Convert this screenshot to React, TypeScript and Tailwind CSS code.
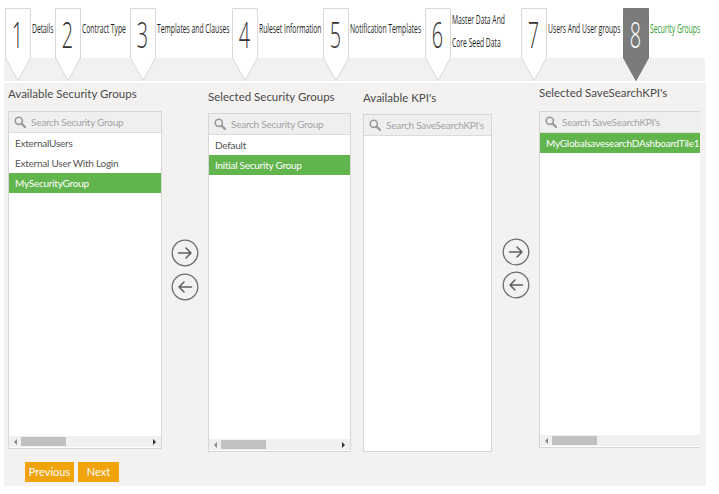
import React from 'react';

const steps = [
  { n: '1', label: ['Details'], w: 'w-[25px]' },
  { n: '2', label: ['Contract Type'], w: 'w-[50px]' },
  { n: '3', label: ['Templates and Clauses'], w: 'w-[77px]' },
  { n: '4', label: ['Ruleset Information'], w: 'w-[66px]' },
  { n: '5', label: ['Notification Templates'], w: 'w-[77px]' },
  { n: '6', label: ['Master Data And', 'Core Seed Data'], w: 'w-[71px]' },
  { n: '7', label: ['Users And User groups'], w: 'w-[77px]' },
  { n: '8', label: ['Security Groups'], w: 'w-[60px]', active: true },
];

function StepTab({ n, active }: { n: string; active?: boolean }) {
  return (
    <div className="relative w-[25px] h-[50px] mt-[8px] shrink-0">
      <svg className="absolute left-0 top-0 overflow-visible" width="26" height="73" viewBox="0 0 26 73">
        <polygon
          points="0.5,0.5 25.5,0.5 25.5,50 13,72.5 0.5,50"
          fill={active ? '#7b7b7b' : '#ffffff'}
          stroke={active ? '#7b7b7b' : '#d9d9d9'}
          strokeWidth="1"
        />
      </svg>
      <div className="absolute inset-0 flex items-center justify-center pt-[3px]">
        <span
          className={`inline-block scale-x-[0.55] font-['Open_Sans',sans-serif] text-[36px] leading-none font-light ${active ? 'text-white' : 'text-[#333]'}`}
        >
          {n}
        </span>
      </div>
    </div>
  );
}

function SearchIcon() {
  return (
    <svg width="12" height="12" viewBox="0 0 12 12" className="shrink-0">
      <circle cx="4.8" cy="4.8" r="3.6" fill="none" stroke="#9a9a9a" strokeWidth="1.6" />
      <line x1="7.6" y1="7.6" x2="11" y2="11" stroke="#9a9a9a" strokeWidth="2.2" strokeLinecap="round" />
    </svg>
  );
}

function CircleArrow({ dir }: { dir: 'right' | 'left' }) {
  return (
    <svg width="28" height="28" viewBox="0 0 28 28">
      <circle cx="14" cy="14" r="12.8" fill="none" stroke="#6e6e6e" strokeWidth="1.3" />
      {dir === 'right' ? (
        <path d="M7.5 14 H20 M15 9 L20 14 L15 19" fill="none" stroke="#5e5e5e" strokeWidth="1.5" strokeLinecap="round" strokeLinejoin="round" />
      ) : (
        <path d="M20.5 14 H8 M13 9 L8 14 L13 19" fill="none" stroke="#5e5e5e" strokeWidth="1.5" strokeLinecap="round" strokeLinejoin="round" />
      )}
    </svg>
  );
}

function HScroll({ right = true }: { right?: boolean }) {
  return (
    <div className="mt-auto h-[11px] bg-[#f0f0f0] flex items-center pl-[5px] pr-[5px] mb-[1px]">
      <span className="w-0 h-0 border-y-[3px] border-y-transparent border-r-[3px] border-r-[#8a8a8a]" />
      <span className="ml-[4px] w-[45px] h-[9px] bg-[#c1c1c1]" />
      {right && <span className="ml-auto w-0 h-0 border-y-[3px] border-y-transparent border-l-[3px] border-l-[#333]" />}
    </div>
  );
}

function ListBox({
  placeholder,
  items,
  selected,
  h,
  scroll,
  scrollRight = true,
  openRight,
}: {
  placeholder: string;
  items: string[];
  selected?: string;
  h: string;
  scroll?: boolean;
  scrollRight?: boolean;
  openRight?: boolean;
}) {
  return (
    <div className={`${h} bg-white border border-[#d6d6d6] ${openRight ? 'border-r-0' : ''} flex flex-col overflow-hidden`}>
      <div className="h-[21px] shrink-0 bg-[#efefef] border-b border-[#dcdcdc] flex items-center gap-[5px] pl-[5px]">
        <SearchIcon />
        <span className="text-[10px] tracking-[-0.25px] text-[#a3a3a3] whitespace-nowrap">{placeholder}</span>
      </div>
      {items.map((it) => (
        <div
          key={it}
          className={`h-[20px] shrink-0 flex items-center pl-[6px] text-[10px] tracking-[-0.25px] whitespace-nowrap ${
            it === selected ? 'bg-[#62b54d] text-white' : 'text-[#555]'
          }`}
        >
          {it}
        </div>
      ))}
      {scroll && <HScroll right={scrollRight} />}
    </div>
  );
}

export default function App() {
  return (
    <div className="w-[719px] h-[494px] bg-white overflow-hidden font-['Lato',sans-serif]">
      {/* Wizard steps */}
      <div className="relative z-10 h-[58px] flex items-start pl-[5px]">
        {steps.map((s) => (
          <div key={s.n} className="flex items-start shrink-0">
            <StepTab n={s.n} active={s.active} />
            <div className={`${s.w} h-[56px] shrink-0 pl-[2px] flex flex-col justify-center ${s.label.length > 1 ? 'pt-[6px]' : ''}`}>
              {s.label.map((l) => (
                <span
                  key={l}
                  className={`block origin-left scale-x-[0.52] font-['Open_Sans',sans-serif] whitespace-nowrap text-[13px] ${
                    s.label.length > 1 ? 'leading-[23px]' : 'leading-[16px]'
                  } ${s.active ? 'text-[#2f9a2f]' : 'text-[#1e1e1e]'}`}
                >
                  {l}
                </span>
              ))}
            </div>
          </div>
        ))}
      </div>
      <div className="ml-[4px] w-[701px] h-[23px] bg-[#f2f1f0] mb-[2px]" />

      {/* Main panel */}
      <div className="ml-[4px] w-[702px] bg-[#f3f2f1] pl-[4px] pb-[4px]">
        <div className="h-[369px] flex items-start text-[#4a4a4a]">
          <div className="w-[154px] pt-[3px] shrink-0">
            <div className="h-[16px] leading-[16px] text-[11.5px] whitespace-nowrap">Available Security Groups</div>
            <div className="mt-[9px]">
              <ListBox
                h="h-[338px]"
                placeholder="Search Security Group"
                items={['ExternalUsers', 'External User With Login', 'MySecurityGroup']}
                selected="MySecurityGroup"
                scroll
              />
            </div>
          </div>

          <div className="w-[46px] shrink-0 flex flex-col items-center pt-[156px] gap-[6px]">
            <CircleArrow dir="right" />
            <CircleArrow dir="left" />
          </div>

          <div className="w-[143px] pt-[6px] shrink-0">
            <div className="h-[16px] leading-[16px] text-[11.5px] whitespace-nowrap">Selected Security Groups</div>
            <div className="mt-[8px]">
              <ListBox
                h="h-[339px]"
                placeholder="Search Security Group"
                items={['Default', 'Initial Security Group']}
                selected="Initial Security Group"
                scroll
              />
            </div>
          </div>

          <div className="w-[12px] shrink-0" />

          <div className="w-[129px] pt-[7px] shrink-0">
            <div className="h-[16px] leading-[16px] text-[11.5px] whitespace-nowrap">Available KPI's</div>
            <div className="mt-[8px]">
              <ListBox h="h-[338px]" placeholder="Search SaveSearchKPI's" items={[]} />
            </div>
          </div>

          <div className="w-[47px] shrink-0 flex flex-col items-center pt-[155px] gap-[5px]">
            <CircleArrow dir="right" />
            <CircleArrow dir="left" />
          </div>

          <div className="w-[161px] pt-[2px] shrink-0">
            <div className="h-[16px] leading-[16px] text-[11.5px] whitespace-nowrap">Selected SaveSearchKPI's</div>
            <div className="mt-[10px]">
              <ListBox
                h="h-[337px]"
                placeholder="Search SaveSearchKPI's"
                items={['MyGlobalsavesearchDAshboardTile1']}
                selected="MyGlobalsavesearchDAshboardTile1"
                scroll
                scrollRight={false}
                openRight
              />
            </div>
          </div>
        </div>

        <div className="mt-[10px] h-[20px] flex gap-[4px] pl-[17px]">
          <button className="w-[49px] h-[20px] bg-[#f0a30b] text-white text-[11px] leading-[20px]">Previous</button>
          <button className="w-[41px] h-[20px] bg-[#f0a30b] text-white text-[11px] leading-[20px]">Next</button>
        </div>
      </div>
    </div>
  );
}
